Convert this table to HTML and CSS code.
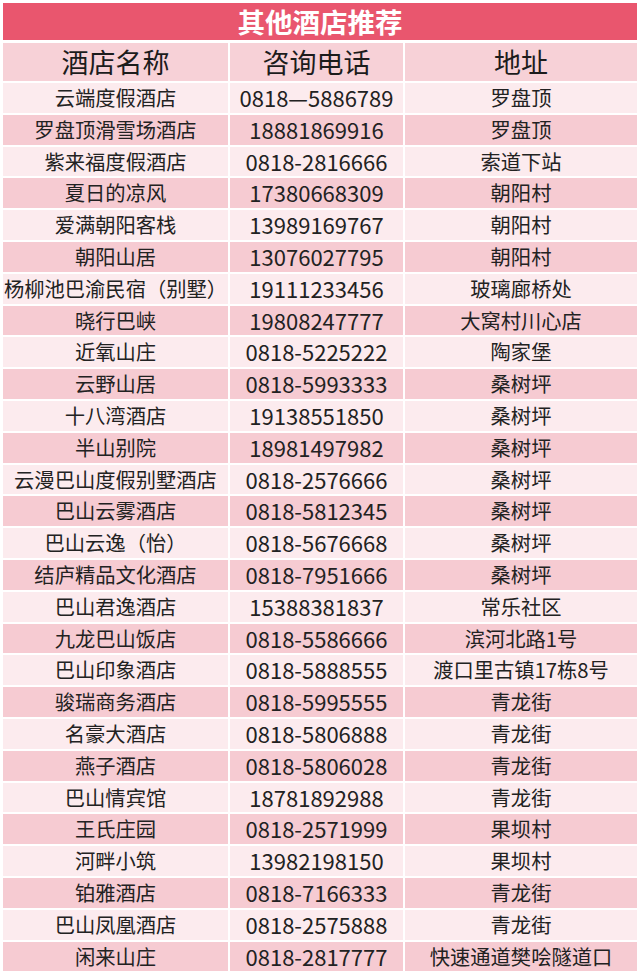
FILE: index.html
```html
<!DOCTYPE html>
<html lang="zh">
<head>
<meta charset="utf-8">
<link rel="stylesheet" href="styles.css">
<title>其他酒店推荐</title>
</head>
<body>
<div class="sheet">
  <div class="title">其他酒店推荐</div>
  <div class="grid">
    <div class="hd">酒店名称</div><div class="hd">咨询电话</div><div class="hd">地址</div>
    <div class="c a">云端度假酒店</div><div class="c a n">0818—5886789</div><div class="c a">罗盘顶</div>
    <div class="c b">罗盘顶滑雪场酒店</div><div class="c b n">18881869916</div><div class="c b">罗盘顶</div>
    <div class="c a">紫来福度假酒店</div><div class="c a n">0818-2816666</div><div class="c a">索道下站</div>
    <div class="c b">夏日的凉风</div><div class="c b n">17380668309</div><div class="c b">朝阳村</div>
    <div class="c a">爱满朝阳客栈</div><div class="c a n">13989169767</div><div class="c a">朝阳村</div>
    <div class="c b">朝阳山居</div><div class="c b n">13076027795</div><div class="c b">朝阳村</div>
    <div class="c a">杨柳池巴渝民宿（别墅）</div><div class="c a n">19111233456</div><div class="c a">玻璃廊桥处</div>
    <div class="c b">晓行巴峡</div><div class="c b n">19808247777</div><div class="c b">大窝村川心店</div>
    <div class="c a">近氧山庄</div><div class="c a n">0818-5225222</div><div class="c a">陶家堡</div>
    <div class="c b">云野山居</div><div class="c b n">0818-5993333</div><div class="c b">桑树坪</div>
    <div class="c a">十八湾酒店</div><div class="c a n">19138551850</div><div class="c a">桑树坪</div>
    <div class="c b">半山别院</div><div class="c b n">18981497982</div><div class="c b">桑树坪</div>
    <div class="c a">云漫巴山度假别墅酒店</div><div class="c a n">0818-2576666</div><div class="c a">桑树坪</div>
    <div class="c b">巴山云雾酒店</div><div class="c b n">0818-5812345</div><div class="c b">桑树坪</div>
    <div class="c a">巴山云逸（怡）</div><div class="c a n">0818-5676668</div><div class="c a">桑树坪</div>
    <div class="c b">结庐精品文化酒店</div><div class="c b n">0818-7951666</div><div class="c b">桑树坪</div>
    <div class="c a">巴山君逸酒店</div><div class="c a n">15388381837</div><div class="c a">常乐社区</div>
    <div class="c b">九龙巴山饭店</div><div class="c b n">0818-5586666</div><div class="c b">滨河北路1号</div>
    <div class="c a">巴山印象酒店</div><div class="c a n">0818-5888555</div><div class="c a">渡口里古镇17栋8号</div>
    <div class="c b">骏瑞商务酒店</div><div class="c b n">0818-5995555</div><div class="c b">青龙街</div>
    <div class="c a">名豪大酒店</div><div class="c a n">0818-5806888</div><div class="c a">青龙街</div>
    <div class="c b">燕子酒店</div><div class="c b n">0818-5806028</div><div class="c b">青龙街</div>
    <div class="c a">巴山情宾馆</div><div class="c a n">18781892988</div><div class="c a">青龙街</div>
    <div class="c b">王氏庄园</div><div class="c b n">0818-2571999</div><div class="c b">果坝村</div>
    <div class="c a">河畔小筑</div><div class="c a n">13982198150</div><div class="c a">果坝村</div>
    <div class="c b">铂雅酒店</div><div class="c b n">0818-7166333</div><div class="c b">青龙街</div>
    <div class="c a">巴山凤凰酒店</div><div class="c a n">0818-2575888</div><div class="c a">青龙街</div>
    <div class="c b">闲来山庄</div><div class="c b n">0818-2817777</div><div class="c b">快速通道樊哙隧道口</div>
  </div>
</div>
</body>
</html>
```
FILE: styles.css
```css
html, body {
  margin: 0;
  padding: 0;
  background: #ffffff;
}
body {
  font-family: "Noto Sans CJK SC", "Noto Sans", sans-serif;
  color: #222222;
}
.sheet {
  width: 634px;
  padding: 3px 3px 0 3px;
}
.title {
  height: 37px;
  background: #e9566e;
  color: #ffffff;
  font-weight: bold;
  font-size: 27.5px;
  line-height: 37px;
  text-align: center;
}
.grid {
  margin-top: 3px;
  display: grid;
  grid-template-columns: 225px 173px 232px;
  column-gap: 2px;
  row-gap: 2px;
  grid-template-rows: 38px;
  grid-auto-rows: 29.8px;
}
.hd {
  background: #f7d1d7;
  font-size: 27px;
  line-height: 38px;
  text-align: center;
  color: #1c1c1c;
}
.c {
  font-size: 20.3px;
  line-height: 29.8px;
  text-align: center;
  white-space: nowrap;
  display: flex;
  align-items: center;
  justify-content: center;
}
.n {
  font-size: 22px;
}
.a {
  background: #fcebee;
}
.b {
  background: #f6cbd2;
}
```
